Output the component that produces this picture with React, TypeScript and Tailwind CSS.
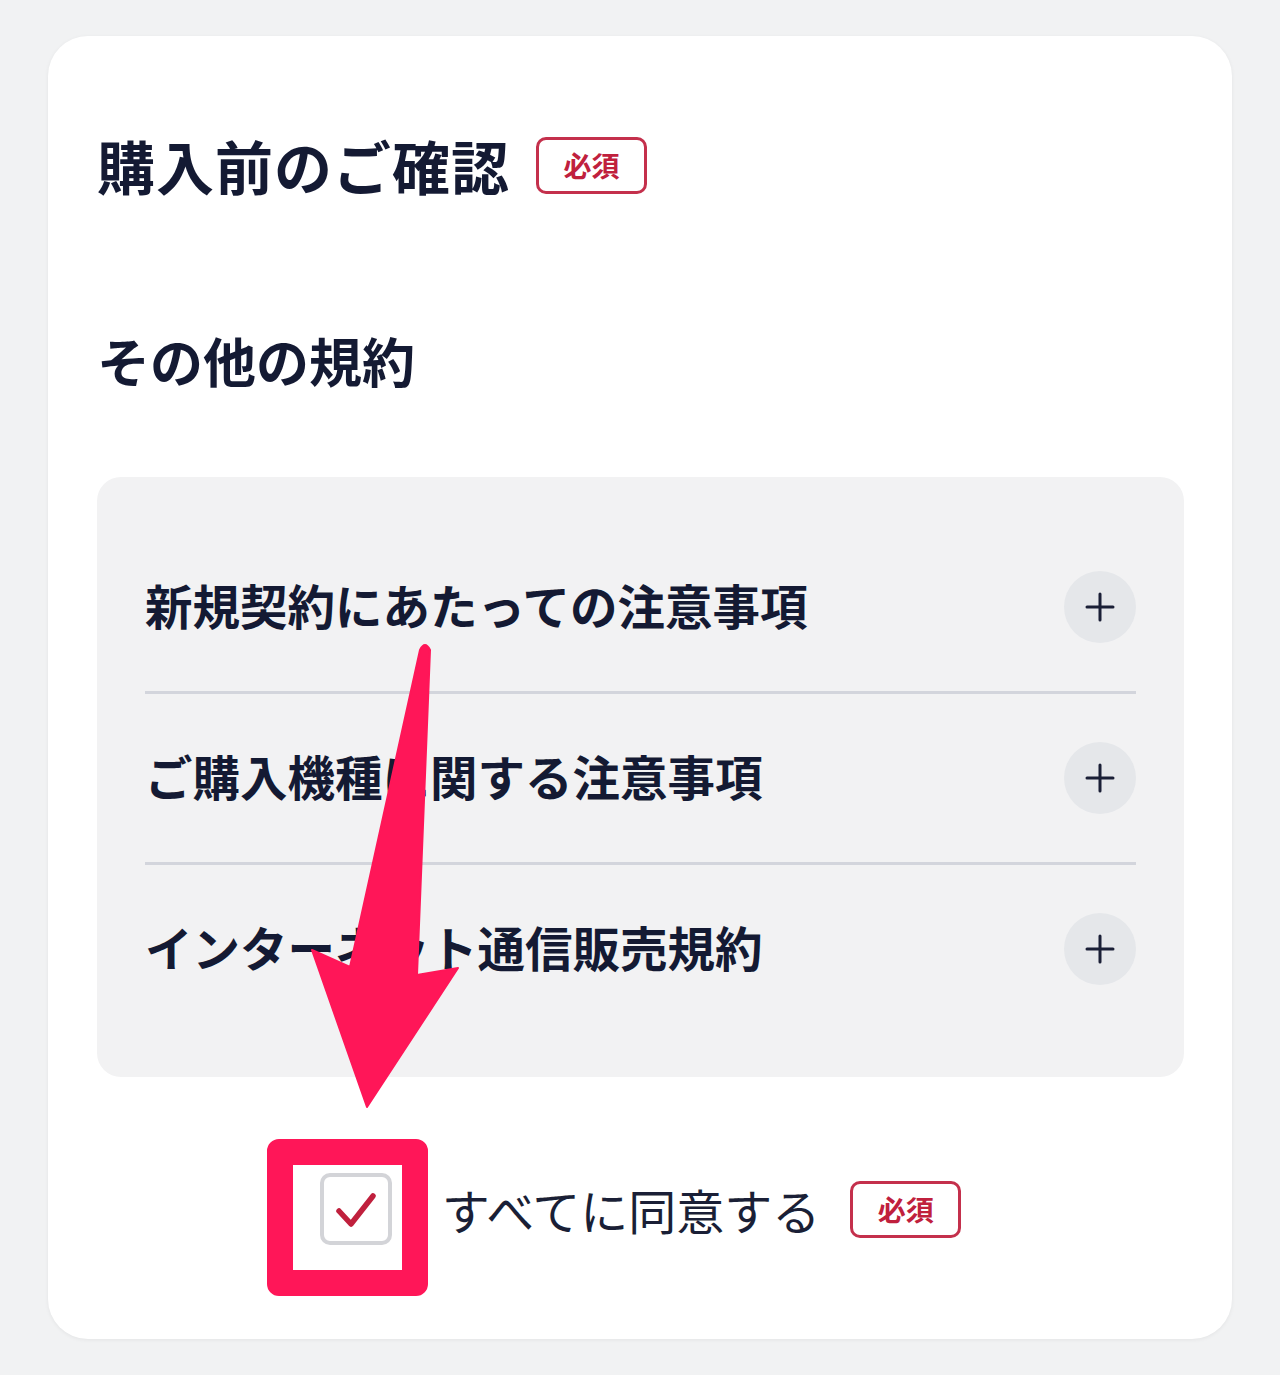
import React from "react";

const FONT = { fontFamily: '"Noto Sans CJK JP", "Noto Sans", sans-serif' };

const TERMS = [
  "新規契約にあたっての注意事項",
  "ご購入機種に関する注意事項",
  "インターネット通信販売規約",
];

function RequiredBadge() {
  return (
    <span className="inline-flex h-[57px] w-[111px] items-center justify-center rounded-[10px] border-[3px] border-[#c4304c] text-[28px] font-bold leading-none text-[#c0203d]">
      必須
    </span>
  );
}

function PlusButton() {
  return (
    <div className="flex h-[72px] w-[72px] flex-shrink-0 items-center justify-center rounded-full bg-[#e5e7ea]">
      <svg width="30" height="30" viewBox="0 0 30 30">
        <path d="M15 2v26M2 15h26" stroke="#1a1f36" strokeWidth="3" strokeLinecap="round" />
      </svg>
    </div>
  );
}

export default function App() {
  return (
    <div className="relative min-h-[1375px] w-full bg-[#f1f2f3] pt-[36px]" style={FONT}>
      <div className="mx-[48px] rounded-[40px] bg-white pb-[94px] pl-[49px] pr-[48px] pt-[100px] shadow-[0_1px_4px_rgba(0,0,0,0.06)]">
        <div className="flex items-center gap-[26px]">
          <h1 className="text-[58px] font-bold leading-none tracking-[1px] text-[#141a33]">購入前のご確認</h1>
          <RequiredBadge />
        </div>

        <h2 className="mt-[140px] text-[53px] font-bold leading-none text-[#141a33]">その他の規約</h2>

        <div className="mt-[90px] rounded-[24px] bg-[#f2f2f3] px-[48px] pb-[44px] pt-[46px]">
          {TERMS.map((t, i) => (
            <div
              key={t}
              className={`flex items-center justify-between ${i < TERMS.length - 1 ? "h-[171px] border-b-[3px] border-[#d3d5dc]" : "h-[168px]"}`}
            >
              <span className="-mt-[5px] text-[47.5px] font-bold leading-none text-[#141a33]">{t}</span>
              <PlusButton />
            </div>
          ))}
        </div>

        <div className="mt-[96px] flex items-center justify-center">
          <div className="relative">
            <div className="absolute left-[-53px] top-[-34px] h-[157px] w-[161px] rounded-[12px] border-[26px] border-[#ff1658]" />
            <div className="relative flex h-[72px] w-[72px] items-center justify-center rounded-[10px] border-[4px] border-[#d3d4d8] bg-white">
              <svg width="48" height="40" viewBox="0 0 48 40">
                <path d="M7 22l12 13L41 7" fill="none" stroke="#c0203d" strokeWidth="5.5" strokeLinecap="round" strokeLinejoin="round" />
              </svg>
            </div>
          </div>
          <span className="ml-[50px] text-[48px] leading-none text-[#1a1f36]">すべてに同意する</span>
          <span className="ml-[30px]">
            <RequiredBadge />
          </span>
        </div>
      </div>

      <svg className="pointer-events-none absolute left-0 top-0" width="1280" height="1375" viewBox="0 0 1280 1375">
        <path
          d="M420 650 Q425 640 430 650 L417 975 L458 968 L367 1107 L312 950 L350 967 Z"
          fill="#ff1658"
          stroke="#ff1658"
          strokeWidth="2"
          strokeLinejoin="round"
        />
      </svg>
    </div>
  );
}
